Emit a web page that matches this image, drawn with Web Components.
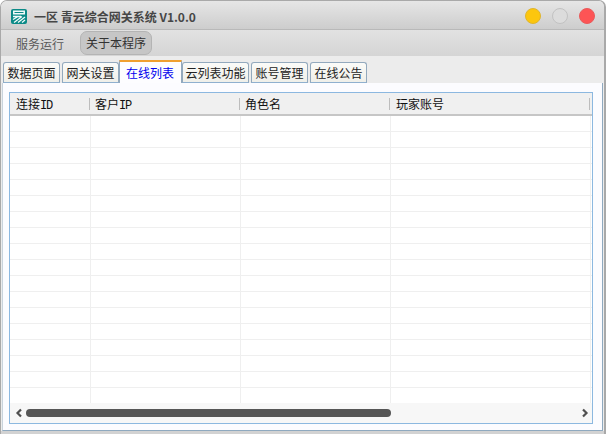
<!DOCTYPE html>
<html lang="zh">
<head>
<meta charset="utf-8">
<style>
  html, body { margin: 0; height: 100%; background: #fff; }
  body { font: 12px "Noto Sans CJK SC", "Liberation Sans", sans-serif; color: #222; overflow: hidden; }
</style>
</head>
<body>
<app-window>
  <title-bar label="一区 青云综合网关系统 V1.0.0"></title-bar>
  <menu-bar></menu-bar>
  <tab-bar></tab-bar>
  <tab-panel><data-grid></data-grid></tab-panel>
</app-window>

<script>
class AppWindow extends HTMLElement {
  constructor() {
    super();
    this.attachShadow({mode: 'open'}).innerHTML = `
      <style>
        :host {
          display: flex; flex-direction: column; box-sizing: border-box;
          width: 606px; height: 434px; background: #ececec;
          border: 1px solid #a9a9a9; border-bottom: 0; border-right-width: 2px;
          border-radius: 7px 7px 0 0; overflow: hidden;
        }
        .foot { flex: 1; background: #d2d2d2; margin: 0 -2px; }
      </style>
      <slot></slot>
      <div class="foot"></div>`;
  }
}

class TitleBar extends HTMLElement {
  constructor() {
    super();
    const label = this.getAttribute('label');
    this.attachShadow({mode: 'open'}).innerHTML = `
      <style>
        :host {
          display: flex; align-items: center; height: 29px; flex: none; box-sizing: border-box;
          padding: 2px 9px 0 10px;
          background: linear-gradient(#e6e6e6, #cdcdcd);
          border-bottom: 1px solid #b9b9b9;
        }
        svg.logo { width: 16px; height: 15px; margin-right: 7px; flex: none; }
        .label { font-size: 12px; font-weight: 600; color: #464646; white-space: pre; flex: 1; }
        .dot { width: 16px; height: 16px; border-radius: 50%; box-sizing: border-box; margin-left: 11px; }
        .min { background: #fcc60e; border: 1px solid #e0b52c; }
        .max { background: #dcdcdc; border: 1px solid #c2c2c2; }
        .close { background: #fd5455; border: 1px solid #e95a5a; }
      </style>
      <svg class="logo" viewBox="0 0 16 15">
        <rect width="16" height="15" rx="2" fill="#0b8a87"/>
        <rect x="2" y="1.5" width="12" height="4" fill="#f2fbfa"/>
        <rect x="3.5" y="3" width="9" height="1" fill="#0b8a87"/>
        <path d="M2 7.5h8M2 10.5 7 7.5M3 13.5 11 7.5M7 13.5 14 8M11 13.5 14 11" stroke="#f2fbfa" stroke-width="1.3" fill="none"/>
      </svg>
      <span class="label">${label}</span>
      <span class="dot min"></span><span class="dot max"></span><span class="dot close"></span>`;
  }
}

class MenuBar extends HTMLElement {
  constructor() {
    super();
    this.attachShadow({mode: 'open'}).innerHTML = `
      <style>
        :host {
          display: flex; align-items: center; height: 26px; flex: none; box-sizing: border-box;
          padding: 0 0 0 15px; background: linear-gradient(#e2e2e2, #d5d5d5);
        }
        span { font-size: 12px; color: #5a5a5a; }
        .on {
          box-sizing: border-box; width: 72px; height: 24px; line-height: 22px; margin-left: 16px; text-align: center;
          color: #333; background: #c6c6c6; border: 1px solid #b4b4b4; border-radius: 7px;
        }
      </style>
      <span>服务运行</span><span class="on">关于本程序</span>`;
  }
}

class TabBar extends HTMLElement {
  constructor() {
    super();
    const tabs = ['数据页面', '网关设置', '在线列表', '云列表功能', '账号管理', '在线公告'];
    this.attachShadow({mode: 'open'}).innerHTML = `
      <style>
        :host {
          display: flex; align-items: flex-end; height: 27px; flex: none; box-sizing: border-box;
          padding-left: 2px; background: #ececec; position: relative; z-index: 1;
          margin-bottom: -1px;
        }
        div {
          box-sizing: border-box; height: 21px; line-height: 20px; padding: 0 3.5px; margin-right: 2px;
          font-size: 12px; color: #222; background: linear-gradient(#fbfbf8, #efefe9);
          border: 1px solid #93a9bd; border-bottom-color: #8fb0cf; border-radius: 3px 3px 0 0;
        }
        .wide { padding: 0 2.5px; }
        .on {
          height: 23px; line-height: 22px; padding: 0 7px 0 6px; margin: 0 0 0 -2px; color: #0000ee; background: #fdfdff;
          border-top: 2px solid #f0a030; border-bottom: 0; border-radius: 1px 1px 0 0;
        }
      </style>
      ${tabs.map((t, i) => `<div class="${i === 2 ? 'on' : i === 3 ? 'wide' : ''}">${t}</div>`).join('')}`;
  }
}

class TabPanel extends HTMLElement {
  constructor() {
    super();
    this.attachShadow({mode: 'open'}).innerHTML = `
      <style>
        :host {
          display: flex; flex-direction: column; flex: none; height: 349px; box-sizing: border-box;
          margin: 0 1px 0 1px; padding: 9px 9px 6px 6px;
          background: #fcfcff; border: 1px solid #8fa9bf; border-left-color: #c9d3dc;
        }
      </style>
      <slot></slot>`;
  }
}

class DataGrid extends HTMLElement {
  constructor() {
    super();
    const cols = ['连接<b>ID</b>', '客户<b>IP</b>', '角色名', '玩家账号'];
    const row = '<div class="row"><i></i><i></i><i></i><i></i></div>';
    this.attachShadow({mode: 'open'}).innerHTML = `
      <style>
        :host {
          display: flex; flex-direction: column; flex: 1; min-height: 0; box-sizing: border-box;
          border: 1px solid #8cb8e0; background: #fff;
        }
        .head {
          display: grid; grid-template-columns: 81px 150px 150px 200px; height: 23px; flex: none; box-sizing: border-box;
          background: #f0f0f0; border-bottom: 2px solid #c6c6c6;
        }
        .head span {
          padding-left: 4px; line-height: 22px; font-size: 12px; color: #111; position: relative;
        }
        .head span:first-child { padding-left: 6px; }
        .head span:last-child { padding-left: 5px; }
        .head b { font: 12px "Liberation Mono", monospace; letter-spacing: -1.2px; }
        .head span::after {
          content: ""; position: absolute; right: 1px; top: 5px; height: 12px; width: 1px; background: #bdbdbd;
        }
        .rows { flex: 1; min-height: 0; overflow: hidden; }
        .row {
          display: grid; grid-template-columns: 81px 150px 150px 200px; height: 16px; box-sizing: border-box;
          border-bottom: 1px solid #efefef;
        }
        .row i { border-right: 1px solid #efefef; }
        .bar {
          display: flex; align-items: center; height: 20px; flex: none; background: #f7f7f7;
          padding: 0 3px 0 5px; box-sizing: border-box; gap: 3px;
        }
        .bar svg { width: 8px; height: 10px; flex: none; }
        .track { flex: 1; height: 8px; display: flex; }
        .thumb { width: 365px; height: 8px; border-radius: 4px; background: #565656; }
      </style>
      <div class="head">${cols.map(c => `<span>${c}</span>`).join('')}</div>
      <div class="rows">${row.repeat(18)}</div>
      <div class="bar">
        <svg viewBox="0 0 8 10"><path d="M6 1.5 2.5 5 6 8.5" fill="none" stroke="#505050" stroke-width="2.2"/></svg>
        <div class="track"><div class="thumb"></div></div>
        <svg viewBox="0 0 8 10"><path d="M2 1.5 5.5 5 2 8.5" fill="none" stroke="#505050" stroke-width="2.2"/></svg>
      </div>`;
  }
}

customElements.define('app-window', AppWindow);
customElements.define('title-bar', TitleBar);
customElements.define('menu-bar', MenuBar);
customElements.define('tab-bar', TabBar);
customElements.define('tab-panel', TabPanel);
customElements.define('data-grid', DataGrid);
</script>
</body>
</html>
